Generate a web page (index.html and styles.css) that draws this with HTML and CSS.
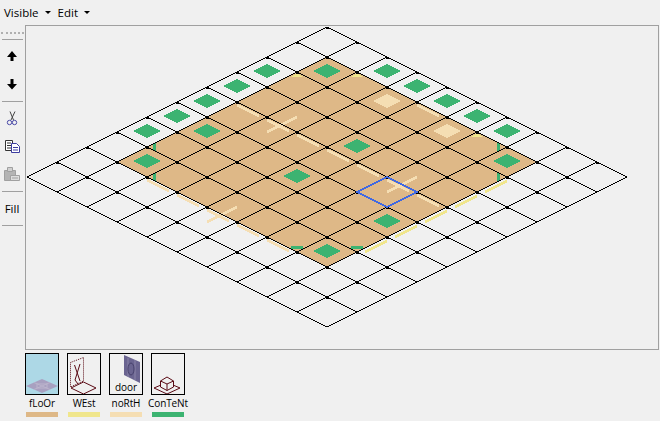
FILE: index.html
```html
<!DOCTYPE html>
<html lang="en">

<head>
    <meta charset="UTF-8">
    <title>Tile Editor</title>
    <link rel="stylesheet" href="styles.css">
</head>

<body>
    <div class="menubar">
        <div class="menu">Visible <span class="arrow"></span></div>
        <div class="menu">Edit <span class="arrow"></span></div>
    </div>

    <div class="workspace">
        <div class="toolbar">
            <div class="grip"></div>
            <hr class="sep">
            <div class="tool">
                <svg width="16" height="16" viewBox="0 0 16 16"><path d="M8 3 L13 9 H9.5 V13 H6.5 V9 H3 Z" fill="#000"/></svg>
            </div>
            <div class="tool">
                <svg width="16" height="16" viewBox="0 0 16 16"><path d="M8 13.5 L13 8 H9.5 V3 H6.5 V8 H3 Z" fill="#000"/></svg>
            </div>
            <hr class="sep">
            <div class="tool">
                <svg width="16" height="16" viewBox="0 0 16 16" fill="none">
                    <path d="M6 1.5 L9.5 10 M11 1.5 L7 10" stroke="#444"/>
                    <circle cx="5.5" cy="12.5" r="2.2" stroke="#4a4aa8"/>
                    <circle cx="10.5" cy="12.5" r="2.2" stroke="#4a4aa8"/>
                </svg>
            </div>
            <div class="tool">
                <svg width="16" height="16" viewBox="0 0 16 16">
                    <path d="M1.5 2.5 H8.5 V12.5 H1.5 Z M3 5 H7 M3 7.5 H7 M3 10 H7" fill="#fff" stroke="#333"/>
                    <path d="M7.5 5.5 H12.5 L15.5 8.5 V14.5 H7.5 Z M9 9.5 H14 M9 12 H14" fill="#fff" stroke="#3c3ca0"/>
                </svg>
            </div>
            <div class="tool">
                <svg width="16" height="16" viewBox="0 0 16 16">
                    <path d="M.5 4.5 H11.5 V14.5 H.5 Z" fill="#b4b4b4" stroke="#a0a0a0"/>
                    <path d="M3.5 1.5 H8.5 V5.5 H3.5 Z" fill="#d0d0d0" stroke="#a0a0a0"/>
                    <path d="M6.5 9.5 H15.5 V14.5 H6.5 Z M8 12 H14" fill="#dcdcdc" stroke="#a0a0a0"/>
                </svg>
            </div>
            <hr class="sep">
            <div class="tool">Fill</div>
            <hr class="sep">
        </div>

        <div class="canvas">
            <svg class="iso" width="632" height="323" viewBox="26 26 632 323">
                <defs>
                    <pattern id="crossings" patternUnits="userSpaceOnUse" x="312" y="19" width="60" height="30">
                        <rect x="14" y="8" width="3" height="2"/>
                        <rect x="44" y="23" width="3" height="2"/>
                    </pattern>
                </defs>

                <!-- floor -->
                <polygon class="floor" points="327,57 537,162 327,267 117,162"/>

                <!-- walls along the floor -->
                <g class="wall-north">
                    <line x1="237" y1="105" x2="259" y2="116"/>
                    <line x1="267" y1="120" x2="289" y2="131"/>
                    <line x1="267" y1="132" x2="297" y2="117"/>
                    <line x1="297" y1="135" x2="319" y2="146"/>
                    <line x1="327" y1="150" x2="349" y2="161"/>
                    <line x1="357" y1="165" x2="379" y2="176"/>
                    <line x1="387" y1="180" x2="409" y2="191"/>
                    <line x1="387" y1="192" x2="417" y2="177"/>
                    <line x1="417" y1="195" x2="439" y2="206"/>
                    <line x1="417" y1="105" x2="439" y2="116"/>
                    <line x1="147" y1="180" x2="169" y2="191"/>
                    <line x1="177" y1="195" x2="199" y2="206"/>
                    <line x1="207" y1="210" x2="229" y2="221"/>
                    <line x1="207" y1="222" x2="237" y2="207"/>
                    <line x1="237" y1="225" x2="259" y2="236"/>
                    <line x1="267" y1="240" x2="289" y2="251"/>
                </g>
                <g class="wall-west">
                    <line x1="365" y1="252" x2="387" y2="241"/>
                    <line x1="395" y1="237" x2="417" y2="226"/>
                    <line x1="425" y1="222" x2="447" y2="211"/>
                    <line x1="455" y1="207" x2="477" y2="196"/>
                    <line x1="485" y1="192" x2="507" y2="181"/>
                </g>
                <polygon class="cap" points="297,73 303,77 291,77"/>
                <polygon class="cap" points="357,73 363,77 351,77"/>
                <polygon class="cap" points="477,133 483,137 471,137"/>

                <!-- light floor tiles -->
                <polygon class="tile-light" points="387,94 401,101 387,108 373,101"/>
                <polygon class="tile-light" points="447,124 461,131 447,138 433,131"/>

                <!-- content markers -->
                <g class="content">
                    <polygon points="267,64 281,71 267,78 253,71"/>
                    <polygon points="237,79 251,86 237,93 223,86"/>
                    <polygon points="207,94 221,101 207,108 193,101"/>
                    <polygon points="177,109 191,116 177,123 163,116"/>
                    <polygon points="147,124 161,131 147,138 133,131"/>
                    <polygon points="207,124 221,131 207,138 193,131"/>
                    <polygon points="147,154 161,161 147,168 133,161"/>
                    <polygon points="327,64 341,71 327,78 313,71"/>
                    <polygon points="387,64 401,71 387,78 373,71"/>
                    <polygon points="417,79 431,86 417,93 403,86"/>
                    <polygon points="447,94 461,101 447,108 433,101"/>
                    <polygon points="477,109 491,116 477,123 463,116"/>
                    <polygon points="507,124 521,131 507,138 493,131"/>
                    <polygon points="507,154 521,161 507,168 493,161"/>
                    <polygon points="357,139 371,146 357,153 343,146"/>
                    <polygon points="297,169 311,176 297,183 283,176"/>
                    <polygon points="387,214 401,221 387,228 373,221"/>
                    <polygon points="327,244 341,251 327,258 313,251"/>
                    <rect x="153" y="143" width="3" height="8"/>
                    <rect x="153" y="173" width="3" height="8"/>
                    <rect x="497" y="143" width="3" height="8"/>
                    <rect x="497" y="173" width="3" height="8"/>
                    <rect x="291" y="246" width="12" height="3"/>
                    <rect x="351" y="246" width="12" height="3"/>
                </g>

                <!-- grid -->
                <g class="grid">
                    <line x1="327" y1="27" x2="627" y2="177"/>
                    <line x1="297" y1="42" x2="597" y2="192"/>
                    <line x1="267" y1="57" x2="567" y2="207"/>
                    <line x1="237" y1="72" x2="537" y2="222"/>
                    <line x1="207" y1="87" x2="507" y2="237"/>
                    <line x1="177" y1="102" x2="477" y2="252"/>
                    <line x1="147" y1="117" x2="447" y2="267"/>
                    <line x1="117" y1="132" x2="417" y2="282"/>
                    <line x1="87" y1="147" x2="387" y2="297"/>
                    <line x1="57" y1="162" x2="357" y2="312"/>
                    <line x1="27" y1="177" x2="327" y2="327"/>
                    <line x1="327" y1="27" x2="27" y2="177"/>
                    <line x1="357" y1="42" x2="57" y2="192"/>
                    <line x1="387" y1="57" x2="87" y2="207"/>
                    <line x1="417" y1="72" x2="117" y2="222"/>
                    <line x1="447" y1="87" x2="147" y2="237"/>
                    <line x1="477" y1="102" x2="177" y2="252"/>
                    <line x1="507" y1="117" x2="207" y2="267"/>
                    <line x1="537" y1="132" x2="237" y2="282"/>
                    <line x1="567" y1="147" x2="267" y2="297"/>
                    <line x1="597" y1="162" x2="297" y2="312"/>
                    <line x1="627" y1="177" x2="327" y2="327"/>
                </g>
                <polygon class="crossings" points="327,27 627,177 327,327 27,177"/>

                <!-- selected tile -->
                <polygon class="cursor" points="387,177 417,192 387,207 357,192"/>
            </svg>
        </div>
    </div>

    <div class="layers">
        <div class="layer">
            <div class="thumb thumb-floor">
                <svg width="32" height="40" viewBox="0 0 32 40">
                    <polygon points="16,25 32,32 16,39 0,32" fill="#a8a0c0"/>
                    <path d="M8 28.5 L24 35.5 M24 28.5 L8 35.5 M11 30 H21 V34 H11 Z" stroke="#bcb4cc" fill="none"/>
                </svg>
            </div>
            <div class="layer-name">fLoOr</div>
            <div class="swatch swatch-floor"></div>
        </div>
        <div class="layer">
            <div class="thumb">
                <svg width="32" height="40" viewBox="0 0 32 40" fill="none" stroke="#5a0a14">
                    <path d="M2.5 8.5 L15.5 3.5 V27 L2.5 33 Z" stroke-dasharray="1 1"/>
                    <path d="M6.5 11 L12 27 M12 10 L7 26 L10 30"/>
                    <path d="M15.5 28 L28 34 L15.5 40 L3 34 Z"/>
                </svg>
            </div>
            <div class="layer-name">WEst</div>
            <div class="swatch swatch-west"></div>
        </div>
        <div class="layer">
            <div class="thumb">
                <svg width="32" height="40" viewBox="0 0 32 40">
                    <polygon points="14,1 30,8 30,29 14,21" fill="#6a6490"/>
                    <path d="M18 4 V23 M25 6 V26" stroke="#8a84a8"/>
                    <ellipse cx="21" cy="15" rx="3" ry="6" fill="none" stroke="#46406c"/>
                </svg>
                <span class="thumb-label">door</span>
            </div>
            <div class="layer-name">noRtH</div>
            <div class="swatch swatch-north"></div>
        </div>
        <div class="layer">
            <div class="thumb">
                <svg width="32" height="40" viewBox="0 0 32 40" fill="none" stroke="#5a0a14">
                    <path d="M9 31 L2 34 L15 40 L28 34 L21 31"/>
                    <path d="M15 23 L21.5 27 V33 L15 36.5 L8.5 33 V27 Z M8.5 27 L15 30 L21.5 27 M15 30 V36.5"/>
                </svg>
            </div>
            <div class="layer-name">ConTeNt</div>
            <div class="swatch swatch-content"></div>
        </div>
    </div>
</body>

</html>
```

FILE: styles.css
```css
html,
body {
    margin: 0;
    padding: 0;
}

body {
    width: 660px;
    height: 421px;
    overflow: hidden;
    background-color: #f0f0f0;
    font-family: 'Open Sans', sans-serif;
    font-size: 11.5px;
    color: #000;
}

.menubar {
    display: flex;
    gap: 7px;
    height: 25px;
    padding-left: 4px;
    align-items: center;
    box-sizing: border-box;
}

.menu {
    display: flex;
    align-items: center;
    gap: 6px;
}

.arrow {
    width: 0;
    height: 0;
    border-left: 3px solid transparent;
    border-right: 3px solid transparent;
    border-top: 3px solid #000;
}

.workspace {
    display: flex;
    height: 325px;
    padding-right: 1px;
}

.toolbar {
    width: 25px;
    flex: none;
    box-sizing: border-box;
}

.grip {
    height: 2px;
    margin: 7px 1px 5px;
    border-top: 2px dotted #b0b0b0;
    box-sizing: border-box;
}

.sep {
    height: 1px;
    margin: 3px 2px 2px;
    border: 0;
    background-color: #a0a0a0;
}

.grip + .sep {
    margin-top: 0;
}

.tool {
    display: flex;
    align-items: center;
    justify-content: center;
    width: 24px;
    height: 28px;
}

.canvas {
    flex: 1;
    box-sizing: border-box;
    border: 1px solid #a0a0a0;
}

.iso {
    display: block;
}

.floor {
    fill: #deb887;
}

.grid line {
    stroke: #000;
    stroke-width: 1;
    shape-rendering: crispEdges;
}

.crossings {
    fill: url(#crossings);
    shape-rendering: crispEdges;
}

.wall-north line {
    stroke: #f5deb3;
    stroke-width: 2.6;
    shape-rendering: crispEdges;
}

.wall-west line {
    stroke: #f0e68c;
    stroke-width: 2.6;
    shape-rendering: crispEdges;
}

.cap {
    fill: #f0e68c;
}

.tile-light {
    fill: #f5deb3;
    shape-rendering: crispEdges;
}

.content {
    fill: #3cb371;
    shape-rendering: crispEdges;
}

.cursor {
    fill: none;
    stroke: #4169e1;
    stroke-width: 2;
    shape-rendering: crispEdges;
}

.layers {
    display: flex;
    gap: 8px;
    padding: 3px 0 0 25px;
}

.layer {
    width: 34px;
    display: flex;
    flex-direction: column;
    align-items: center;
}

.thumb {
    position: relative;
    width: 32px;
    height: 40px;
    border: 1px solid #000;
    overflow: hidden;
}

.thumb svg {
    display: block;
}

.thumb-floor {
    background-color: #add8e6;
}

.thumb-label {
    position: absolute;
    left: 0;
    right: 0;
    bottom: 1px;
    font-size: 10px;
    line-height: 11px;
    text-align: center;
    color: #000;
}

.layer-name {
    margin-top: 2px;
    font-size: 10px;
    line-height: 13px;
    letter-spacing: -0.1px;
    white-space: nowrap;
}

.swatch {
    width: 32px;
    height: 5px;
    margin-top: 2px;
}

.swatch-floor {
    background-color: #deb887;
}

.swatch-west {
    background-color: #f0e68c;
}

.swatch-north {
    background-color: #f5deb3;
}

.swatch-content {
    background-color: #3cb371;
}
```
